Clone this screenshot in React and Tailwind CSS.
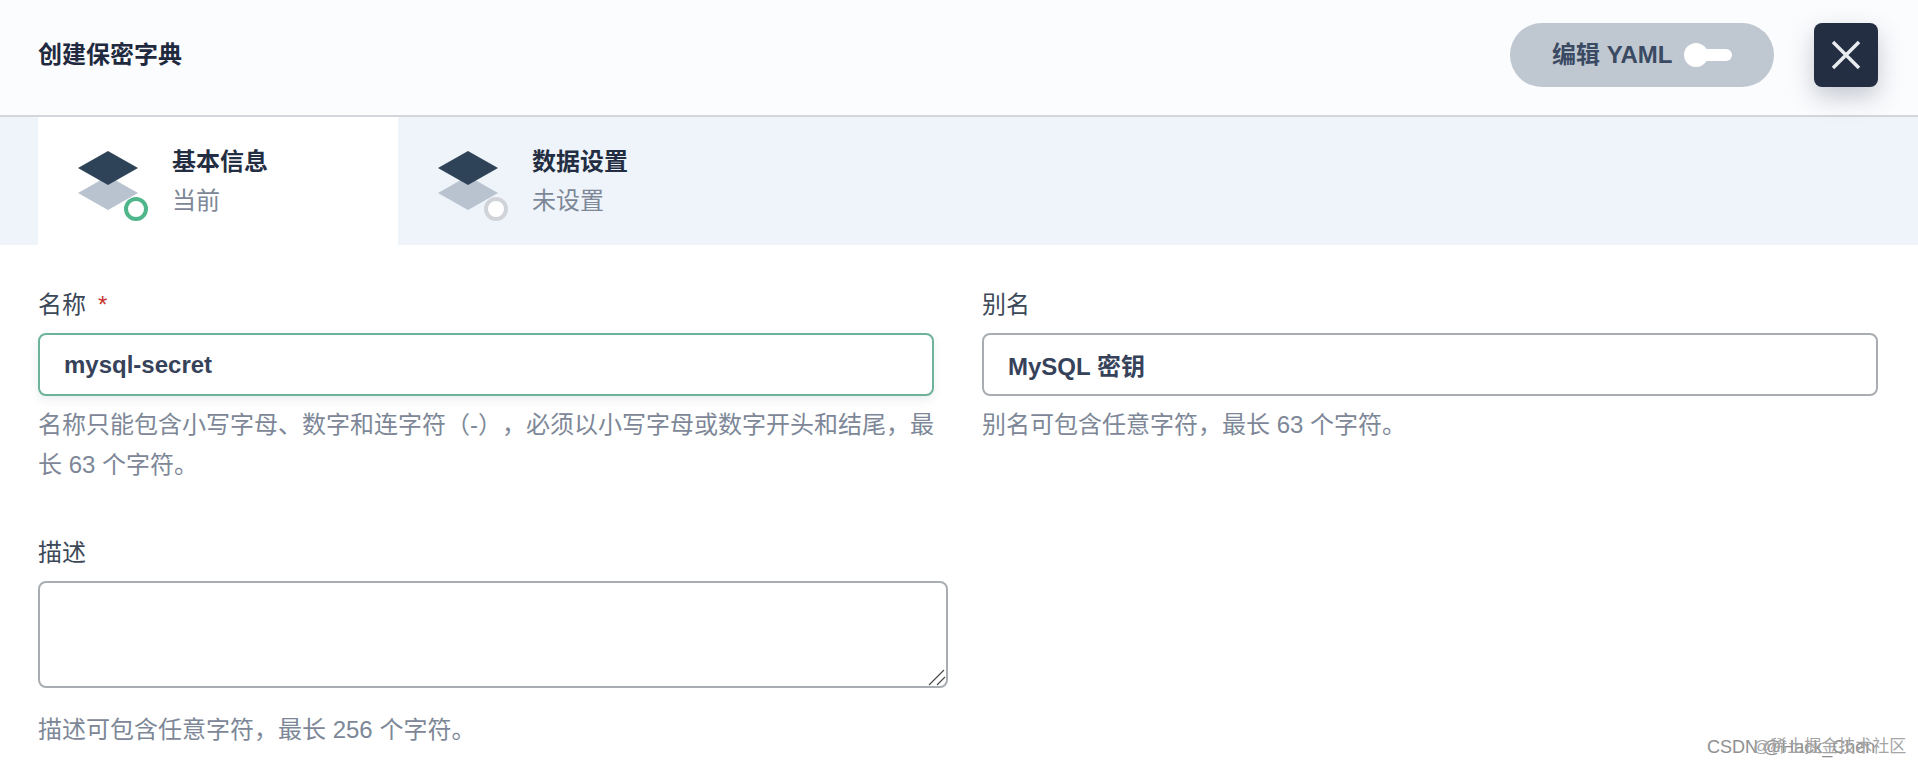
const font = "font-['Liberation_Sans','Noto_Sans_CJK_SC',sans-serif]";

const StepIcon = ({ active }) => (
  <svg width="72" height="72" viewBox="0 0 72 72" className="shrink-0">
    <path d="M30 25 L60 42 L30 59 L0 42 Z" fill="#b8c3cf" />
    <path d="M30 0 L60 17 L30 34 L0 17 Z" fill="#2f4358" />
    <circle
      cx="58"
      cy="58"
      r="10"
      fill="#ffffff"
      stroke={active ? "#4fb58a" : "#d0d3d8"}
      strokeWidth="4"
    />
  </svg>
);

const Step = ({ title, sub, active }) => (
  <div
    className={`flex w-[360px] h-full pl-10 pt-[34px] gap-[22px] ${active ? "bg-white" : ""}`}
  >
    <StepIcon active={active} />
    <div className="-mt-1 flex flex-col">
      <span className="text-2xl leading-[30px] font-bold text-[#242e42]">{title}</span>
      <span className="text-2xl leading-[30px] mt-[9px] text-[#7d8797]">{sub}</span>
    </div>
  </div>
);

const Field = ({ label, required, value, help, focused }) => (
  <div className="flex flex-col">
    <label className="text-2xl leading-10 text-[#3c4858]">
      {label}
      {required && <span className="ml-3 text-2xl text-[#c8322f]">*</span>}
    </label>
    <input
      readOnly
      value={value}
      className={`mt-2 h-[63px] w-full rounded-lg border-2 bg-white px-6 text-2xl font-bold text-[#36425a] outline-none ${
        focused
          ? "border-[#6db39a] shadow-[0_4px_10px_rgba(60,80,100,0.1)]"
          : "border-[#a9adb2]"
      }`}
    />
    <p className="mt-[9px] text-2xl leading-10 text-[#7d8797] [text-spacing-trim:space-all]">{help}</p>
  </div>
);

export default function App() {
  return (
    <div className={`relative h-[765px] w-[1918px] overflow-hidden bg-white ${font}`}>
      <header className="flex h-[117px] items-start border-b-2 border-[#d3d7dc] bg-[#fbfcfe] pl-[38px] pr-10 pt-[23px]">
        <h1 className="text-2xl leading-[64px] font-bold text-[#1f2a3e]">创建保密字典</h1>
        <button className="ml-auto flex h-16 w-[264px] items-center rounded-full bg-[#bfc7d0] pl-[42px]">
          <span className="text-2xl font-bold text-[#3a4a63]">编辑 YAML</span>
          <span className="relative ml-3 block h-6 w-12">
            <span className="absolute left-0 top-0 size-6 rounded-full bg-white" />
            <span className="absolute right-0 top-1.5 h-3 w-9 rounded-full bg-white" />
          </span>
        </button>
        <button className="ml-10 flex size-16 items-center justify-center rounded-lg bg-[#242e42] shadow-[0_10px_24px_rgba(36,46,66,0.25)]">
          <svg width="32" height="32" viewBox="0 0 32 32">
            <path d="M3 3 L29 29 M29 3 L3 29" stroke="#e8ecef" strokeWidth="3.5" />
          </svg>
        </button>
      </header>

      <nav className="flex h-[128px] bg-[#eef4fa] pl-[38px]">
        <Step title="基本信息" sub="当前" active />
        <Step title="数据设置" sub="未设置" />
      </nav>

      <main className="px-[38px] pt-10">
        <div className="grid grid-cols-[896px_896px] gap-x-12">
          <Field
            label="名称"
            required
            focused
            value="mysql-secret"
            help="名称只能包含小写字母、数字和连字符（-），必须以小写字母或数字开头和结尾，最长 63 个字符。"
          />
          <Field
            label="别名"
            value="MySQL 密钥"
            help="别名可包含任意字符，最长 63 个字符。"
          />
        </div>
        <div className="mt-12 flex flex-col">
          <label className="text-2xl leading-10 text-[#3c4858]">描述</label>
          <div className="relative mt-2 h-[107px] w-[910px]">
            <textarea
              readOnly
              className="block h-full w-full resize-none rounded-lg border-2 border-[#a9adb2] bg-white outline-none"
            />
            <svg width="18" height="18" viewBox="0 0 18 18" className="absolute bottom-0.5 right-0.5">
              <path d="M1 17 L16 2 M9 17 L17 9" stroke="#4a4a4a" strokeWidth="1.2" fill="none" />
            </svg>
          </div>
          <p className="mt-[22px] text-2xl leading-10 text-[#7d8797]">
            描述可包含任意字符，最长 256 个字符。
          </p>
        </div>
      </main>

      <span className="absolute left-[1707px] top-[737px] whitespace-nowrap text-lg leading-5 text-[#8f8f8f]">
        CSDN @Hack_Chen
      </span>
      <span className="absolute left-[1753px] top-[737px] whitespace-nowrap text-[17px] leading-5 text-[#a5a5a5]">
        @稀土掘金技术社区
      </span>
    </div>
  );
}
